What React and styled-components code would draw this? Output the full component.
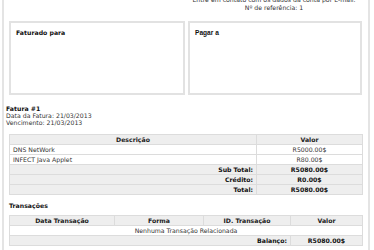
import React from "react";
import styled, { createGlobalStyle } from "styled-components";

const GlobalStyle = createGlobalStyle`
  html, body {
    margin: 0;
    padding: 0;
    background: #ffffff;
  }
  body {
    font-family: "DejaVu Sans", Tahoma, Verdana, sans-serif;
    font-size: 6.2px;
    color: #222222;
  }
`;

const Page = styled.div`
  box-sizing: border-box;
  width: 368px;
  min-height: 262px;
  margin-left: 2px;
  padding: 0 2px;
  border-left: 2px solid #e4e4e4;
  border-right: 2px solid #e4e4e4;
`;

const RefBlock = styled.div`
  width: 176px;
  margin: -4px 4px 0 auto;
  text-align: center;
  line-height: 8px;
  color: #333333;
`;

const Parties = styled.div`
  display: grid;
  grid-template-columns: 176px 174px;
  gap: 3px;
  margin: 9px 4px 0 3px;
`;

const PartyBox = styled.div`
  box-sizing: border-box;
  height: 74px;
  padding: 6px 5px;
  border: 2px solid #e2e2e2;
  background: #ffffff;
`;

const PartyTitle = styled.div`
  font-weight: bold;
  line-height: 8px;
  color: #111111;
  font-family: ${({ $narrow }) =>
    $narrow ? '"Liberation Sans", Arial, sans-serif' : "inherit"};
  font-size: ${({ $narrow }) => ($narrow ? "6.6px" : "inherit")};
`;

const InvoiceInfo = styled.div`
  margin-top: 10px;
  line-height: 7px;
`;

const InvoiceTitle = styled.div`
  font-weight: bold;
  color: #111111;
`;

const InfoLine = styled.div`
  color: #333333;
`;

const Table = styled.table`
  width: 353px;
  margin: ${({ $top }) => $top}px 4px 0 3px;
  border-collapse: collapse;
  table-layout: fixed;
`;

const Th = styled.th`
  height: 9px;
  padding: 0 3px;
  border: 1px solid #dcdcdc;
  background: #eeeeee;
  font-weight: bold;
  text-align: center;
  color: #222222;
  line-height: 8px;
`;

const Td = styled.td`
  height: 9px;
  padding: 0 3px;
  border: 1px solid #dcdcdc;
  background: ${({ $shade }) => ($shade ? "#eeeeee" : "#ffffff")};
  font-weight: ${({ $bold }) => ($bold ? "bold" : "normal")};
  text-align: ${({ $align }) => $align || "left"};
  color: ${({ $bold }) => ($bold ? "#111111" : "#333333")};
  line-height: 8px;
  white-space: nowrap;
  overflow: hidden;
`;

const SectionTitle = styled.div`
  margin: 7px 0 0 3px;
  line-height: 7px;
  font-weight: bold;
  color: #111111;
`;

const items = [
  { desc: "DNS NetWork", value: "R5000.00$" },
  { desc: "INFECT Java Applet", value: "R80.00$" },
];

const totals = [
  { label: "Sub Total:", value: "R5080.00$" },
  { label: "Crédito:", value: "R0.00$" },
  { label: "Total:", value: "R5080.00$" },
];

export default function App() {
  return (
    <>
      <GlobalStyle />
      <Page>
        <RefBlock>
          <div>Entre em contato com os dados da conta por E-mail.</div>
          <div>Nº de referência: 1</div>
        </RefBlock>

        <Parties>
          <PartyBox>
            <PartyTitle>Faturado para</PartyTitle>
          </PartyBox>
          <PartyBox>
            <PartyTitle $narrow>Pagar a</PartyTitle>
          </PartyBox>
        </Parties>

        <InvoiceInfo>
          <InvoiceTitle>Fatura #1</InvoiceTitle>
          <InfoLine>Data da Fatura: 21/03/2013</InfoLine>
          <InfoLine>Vencimento: 21/03/2013</InfoLine>
        </InvoiceInfo>

        <Table $top={8}>
          <colgroup>
            <col style={{ width: 247 }} />
            <col style={{ width: 106 }} />
          </colgroup>
          <thead>
            <tr>
              <Th>Descrição</Th>
              <Th>Valor</Th>
            </tr>
          </thead>
          <tbody>
            {items.map((it) => (
              <tr key={it.desc}>
                <Td>{it.desc}</Td>
                <Td $align="center">{it.value}</Td>
              </tr>
            ))}
            {totals.map((t) => (
              <tr key={t.label}>
                <Td $shade $bold $align="right">
                  {t.label}
                </Td>
                <Td $shade $bold $align="center">
                  {t.value}
                </Td>
              </tr>
            ))}
          </tbody>
        </Table>

        <SectionTitle>Transações</SectionTitle>

        <Table $top={6}>
          <colgroup>
            <col style={{ width: 105 }} />
            <col style={{ width: 89 }} />
            <col style={{ width: 87 }} />
            <col style={{ width: 72 }} />
          </colgroup>
          <thead>
            <tr>
              <Th>Data Transação</Th>
              <Th>Forma</Th>
              <Th>ID. Transação</Th>
              <Th>Valor</Th>
            </tr>
          </thead>
          <tbody>
            <tr>
              <Td colSpan={4} $align="center">
                Nenhuma Transação Relacionada
              </Td>
            </tr>
            <tr>
              <Td colSpan={3} $shade $bold $align="right">
                Balanço:
              </Td>
              <Td $shade $bold $align="center">
                R5080.00$
              </Td>
            </tr>
          </tbody>
        </Table>
      </Page>
    </>
  );
}
